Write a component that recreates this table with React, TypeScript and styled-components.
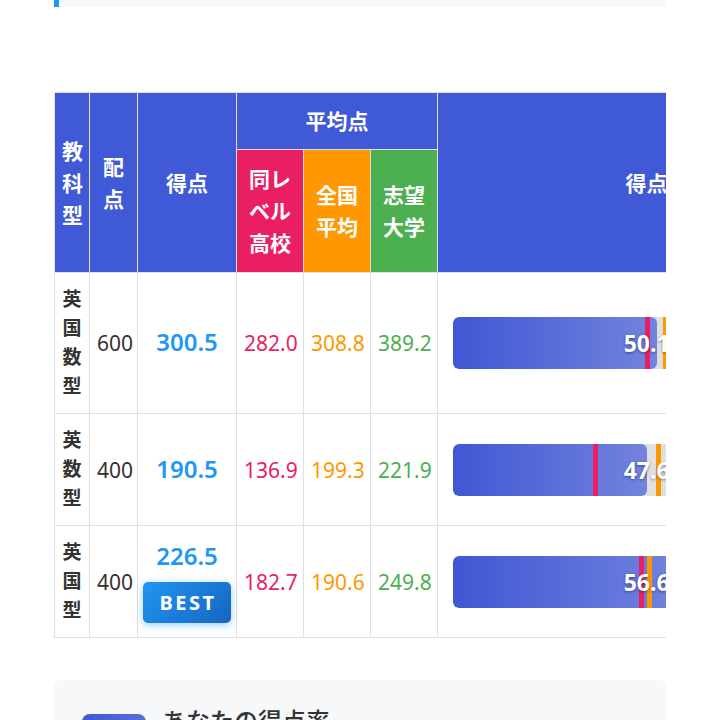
import React from "react";
import styled, { createGlobalStyle } from "styled-components";

const GlobalStyle = createGlobalStyle`
  html, body {
    margin: 0;
    padding: 0;
    background: #ffffff;
    font-family: "Noto Sans", "Noto Sans CJK JP", sans-serif;
    color: #333333;
  }
`;

const BLUE = "#4059d6";
const PINK = "#e91e63";
const ORANGE = "#ff9800";
const GREEN = "#4caf50";

const Page = styled.div`
  padding: 0 54px;
  width: 612px;
`;

const InfoStrip = styled.div`
  height: 7px;
  background: #f7f8fa;
  border-left: 5px solid #2196f3;
`;

const TableWrap = styled.div`
  margin-top: 85px;
  width: 612px;
  overflow: hidden;
`;

const Table = styled.table`
  border-collapse: collapse;
  table-layout: fixed;
  width: 822px;
`;

const HeadCell = styled.th<{ $bg?: string; $pad?: number }>`
  background: ${(p) => p.$bg || BLUE};
  color: #ffffff;
  font-size: 21px;
  font-weight: 700;
  line-height: 32px;
  padding: ${(p) => p.$pad ?? 12}px 7px;
  border: 1px solid #e0e0e0;
  text-align: center;
  vertical-align: middle;
`;

const Cell = styled.td`
  border: 1px solid #e0e0e0;
  padding: 12px 7px;
  text-align: center;
  vertical-align: middle;
`;

const TypeText = styled.span`
  display: block;
  font-size: 19px;
  font-weight: 700;
  line-height: 29px;
  color: #333333;
`;

const MaxText = styled.span`
  font-size: 21px;
  color: #333333;
`;

const ScoreBox = styled.div`
  display: flex;
  flex-direction: column;
  align-items: center;
  gap: 8px;
  margin-top: -2px;
`;

const ScoreText = styled.span`
  font-size: 24px;
  font-weight: 600;
  line-height: 36px;
  color: #2196f3;
`;

const Badge = styled.span`
  display: inline-block;
  background: linear-gradient(135deg, #2196f3, #1565c0);
  color: #ffffff;
  font-size: 20px;
  font-weight: 700;
  letter-spacing: 2.5px;
  line-height: 29px;
  padding: 6px 14px 6px 16px;
  border-radius: 5px;
  box-shadow: 0 2px 8px rgba(33, 150, 243, 0.45);
`;

const AvgText = styled.span<{ $color: string }>`
  font-size: 21px;
  font-weight: 400;
  color: ${(p) => p.$color};
`;

const BarCell = styled.td`
  border: 1px solid #e0e0e0;
  padding: 0 15px;
  vertical-align: middle;
`;

const Bar = styled.div`
  position: relative;
  height: 52px;
  background: #e0e0e0;
  border-radius: 6px;
  overflow: hidden;
`;

const Fill = styled.div`
  height: 100%;
  background: linear-gradient(90deg, #3f57d4, #7383dd);
  border-radius: 6px;
`;

const Marker = styled.div<{ $color: string }>`
  position: absolute;
  top: 0;
  bottom: 0;
  width: 5px;
  background: ${(p) => p.$color};
`;

const BarLabel = styled.span`
  position: absolute;
  inset: 0;
  display: flex;
  align-items: center;
  justify-content: center;
  color: #ffffff;
  font-size: 23px;
  font-weight: 700;
  text-shadow: 0 1px 3px rgba(0, 0, 0, 0.45);
`;

const Summary = styled.div`
  margin-top: 42px;
  background: #f7f8fa;
  border-radius: 8px;
  padding: 23px 28px 28px;
`;

const SummaryHead = styled.div`
  display: flex;
  align-items: flex-start;
  gap: 16px;
`;

const SummaryIcon = styled.div`
  width: 64px;
  height: 64px;
  margin-top: 11px;
  border-radius: 8px;
  background: linear-gradient(135deg, #3f57d4, #7383dd);
  flex-shrink: 0;
`;

const SummaryTitle = styled.h3`
  margin: 0;
  font-size: 24px;
  font-weight: 500;
  line-height: 36px;
  color: #333333;
`;

type Row = {
  type: string;
  max: number;
  score: number;
  same: number;
  nation: number;
  target: number;
  best?: boolean;
};

const rows: Row[] = [
  { type: "英国数型", max: 600, score: 300.5, same: 282.0, nation: 308.8, target: 389.2 },
  { type: "英数型", max: 400, score: 190.5, same: 136.9, nation: 199.3, target: 221.9 },
  { type: "英国型", max: 400, score: 226.5, same: 182.7, nation: 190.6, target: 249.8, best: true },
];

const pct = (v: number, m: number) => (v / m) * 100;

export default function App() {
  return (
    <>
      <GlobalStyle />
      <Page>
        <InfoStrip />
        <TableWrap>
          <Table>
            <colgroup>
              <col style={{ width: 35 }} />
              <col style={{ width: 48 }} />
              <col style={{ width: 99 }} />
              <col style={{ width: 67 }} />
              <col style={{ width: 67 }} />
              <col style={{ width: 67 }} />
              <col style={{ width: 439 }} />
            </colgroup>
            <thead>
              <tr>
                <HeadCell rowSpan={2}>教科型</HeadCell>
                <HeadCell rowSpan={2}>配点</HeadCell>
                <HeadCell rowSpan={2}>得点</HeadCell>
                <HeadCell colSpan={3}>平均点</HeadCell>
                <HeadCell rowSpan={2}>得点率</HeadCell>
              </tr>
              <tr>
                <HeadCell $bg={PINK} $pad={13}>同レベル高校</HeadCell>
                <HeadCell $bg={ORANGE} $pad={13}>全国平均</HeadCell>
                <HeadCell $bg={GREEN} $pad={13}>志望大学</HeadCell>
              </tr>
            </thead>
            <tbody>
              {rows.map((r) => {
                const p = pct(r.score, r.max);
                return (
                  <tr key={r.type}>
                    <Cell>
                      <TypeText>{r.type}</TypeText>
                    </Cell>
                    <Cell>
                      <MaxText>{r.max}</MaxText>
                    </Cell>
                    <Cell>
                      <ScoreBox>
                        <ScoreText>{r.score.toFixed(1)}</ScoreText>
                        {r.best && <Badge>BEST</Badge>}
                      </ScoreBox>
                    </Cell>
                    <Cell>
                      <AvgText $color={PINK}>{r.same.toFixed(1)}</AvgText>
                    </Cell>
                    <Cell>
                      <AvgText $color={ORANGE}>{r.nation.toFixed(1)}</AvgText>
                    </Cell>
                    <Cell>
                      <AvgText $color={GREEN}>{r.target.toFixed(1)}</AvgText>
                    </Cell>
                    <BarCell>
                      <Bar>
                        <Fill style={{ width: `${p}%` }} />
                        <Marker $color={PINK} style={{ left: `${pct(r.same, r.max)}%` }} />
                        <Marker $color={ORANGE} style={{ left: `${pct(r.nation, r.max)}%` }} />
                        <Marker $color={GREEN} style={{ left: `${pct(r.target, r.max)}%` }} />
                        <BarLabel>{p.toFixed(1)}%</BarLabel>
                      </Bar>
                    </BarCell>
                  </tr>
                );
              })}
            </tbody>
          </Table>
        </TableWrap>
        <Summary>
          <SummaryHead>
            <SummaryIcon />
            <SummaryTitle>あなたの得点率</SummaryTitle>
          </SummaryHead>
        </Summary>
      </Page>
    </>
  );
}
